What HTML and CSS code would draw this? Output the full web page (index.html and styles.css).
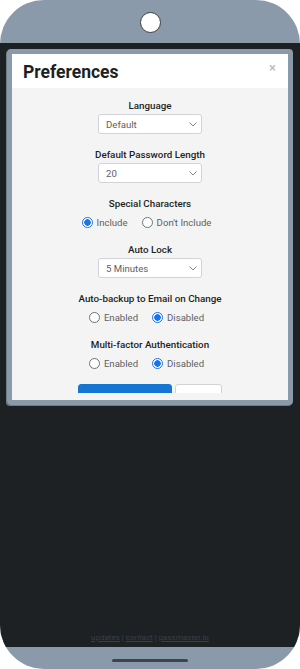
FILE: index.html
```html
<!DOCTYPE html>
<html>
<head>
<meta charset="utf-8">
<link rel="stylesheet" href="styles.css">
</head>
<body>
<div class="phone">
  <div class="top-bezel"><div class="camera"></div></div>
  <div class="screen">
    <div class="modal">
      <div class="modal-header">
        <h1 class="title">Preferences</h1>
        <span class="close">×</span>
      </div>
      <div class="modal-body">
        <div class="scroll">
          <div class="group">
            <div class="label">Language</div>
            <div class="select"><span>Default</span><svg class="chev" width="8" height="5" viewBox="0 0 8 5"><path d="M0.5 0.5 L4 4 L7.5 0.5" fill="none" stroke="#888" stroke-width="1"/></svg></div>
          </div>
          <div class="group">
            <div class="label">Default Password Length</div>
            <div class="select"><span>20</span><svg class="chev" width="8" height="5" viewBox="0 0 8 5"><path d="M0.5 0.5 L4 4 L7.5 0.5" fill="none" stroke="#888" stroke-width="1"/></svg></div>
          </div>
          <div class="group">
            <div class="label">Special Characters</div>
            <div class="radios">
              <label class="opt"><span class="radio checked"></span>Include</label>
              <label class="opt"><span class="radio"></span>Don't Include</label>
            </div>
          </div>
          <div class="group">
            <div class="label">Auto Lock</div>
            <div class="select"><span>5 Minutes</span><svg class="chev" width="8" height="5" viewBox="0 0 8 5"><path d="M0.5 0.5 L4 4 L7.5 0.5" fill="none" stroke="#888" stroke-width="1"/></svg></div>
          </div>
          <div class="group">
            <div class="label">Auto-backup to Email on Change</div>
            <div class="radios">
              <label class="opt"><span class="radio"></span>Enabled</label>
              <label class="opt"><span class="radio checked"></span>Disabled</label>
            </div>
          </div>
          <div class="group">
            <div class="label">Multi-factor Authentication</div>
            <div class="radios">
              <label class="opt"><span class="radio"></span>Enabled</label>
              <label class="opt"><span class="radio checked"></span>Disabled</label>
            </div>
          </div>
          <div class="buttons">
            <button class="btn primary">Save Preferences</button>
            <button class="btn secondary">Cancel</button>
          </div>
        </div>
      </div>
    </div>
    <div class="footer">
      <a href="#">updates</a> | <a href="#">contact</a> | <a href="#">passmaster.io</a>
    </div>
  </div>
  <div class="bottom-bezel"><div class="home-bar"></div></div>
</div>
</body>
</html>
```
FILE: styles.css
```css
html, body {
  margin: 0;
  padding: 0;
  background: #ffffff;
}
body {
  font-family: Roboto, "Liberation Sans", sans-serif;
}
.phone {
  width: 300px;
  height: 669px;
  border-radius: 44px;
  background: #8b9aab;
  overflow: hidden;
  display: flex;
  flex-direction: column;
}
.top-bezel {
  height: 43px;
  flex: none;
  display: flex;
  align-items: center;
  justify-content: center;
}
.camera {
  width: 21px;
  height: 21px;
  border-radius: 50%;
  background: #ffffff;
  border: 1px solid #3a3f45;
  box-sizing: border-box;
  margin-top: 1px;
}
.screen {
  flex: 1;
  background: #1e2124;
  display: flex;
  flex-direction: column;
  padding: 6px 7px 0 7px;
}
.modal {
  height: 356px;
  box-sizing: border-box;
  border: 5px solid #8b9aab;
  border-radius: 4px;
  display: flex;
  flex-direction: column;
  overflow: hidden;
  box-shadow: -1px 1px 0 #6f7c8a;
}
.modal-header {
  height: 34px;
  flex: none;
  background: #ffffff;
  display: flex;
  align-items: center;
  justify-content: space-between;
  padding: 0 12px 0 11px;
}
.title {
  margin: 0;
  font-size: 17.5px;
  font-weight: 700;
  color: #1d1f21;
  padding-top: 2px;
}
.close {
  color: #b5b5b5;
  font-size: 13px;
  margin-top: -7px;
}
.modal-body {
  flex: 1;
  min-height: 0;
  background: #f4f4f4;
  display: flex;
  flex-direction: column;
  padding-bottom: 7px;
}
.scroll {
  flex: 1;
  min-height: 0;
  overflow: hidden;
  display: flex;
  flex-direction: column;
  align-items: center;
  padding-top: 11px;
  gap: 14px;
}
.group {
  display: flex;
  flex-direction: column;
  align-items: center;
  flex: none;
}
.label {
  font-size: 9.8px;
  font-weight: 500;
  color: #1d1f21;
  line-height: 14px;
}
.select {
  position: relative;
  margin-top: 1px;
  width: 104px;
  height: 20px;
  box-sizing: border-box;
  border: 1px solid #d0d4d8;
  border-radius: 3px;
  background: #ffffff;
  display: flex;
  align-items: center;
  padding-left: 7px;
  font-size: 9.6px;
  color: #5c6166;
}
.chev {
  position: absolute;
  right: 4px;
  top: 7px;
}
.radios {
  display: flex;
  justify-content: center;
  gap: 14px;
  margin-top: 4px;
  padding-right: 7px;
  height: 14px;
}
.opt {
  display: flex;
  align-items: center;
  gap: 4px;
  font-size: 9.6px;
  color: #5c6166;
}
.radio {
  width: 11px;
  height: 11px;
  box-sizing: border-box;
  border-radius: 50%;
  border: 1px solid #6e7378;
  background: #ffffff;
  margin-top: 1px;
}
.radio.checked {
  border: 1px solid #1a73e8;
  background: radial-gradient(circle, #1a73e8 0 3px, #ffffff 3.5px);
}
.buttons {
  display: flex;
  gap: 3px;
  flex: none;
}
.btn {
  font-family: Roboto, "Liberation Sans", sans-serif;
  font-size: 9.6px;
  height: 26px;
  border-radius: 3px;
  padding: 0 8px;
  line-height: 14px;
}
.btn.primary {
  width: 94px;
  background: #1476d2;
  border: 1px solid #1476d2;
  color: #ffffff;
}
.btn.secondary {
  width: 47px;
  background: #ffffff;
  border: 1px solid #d0d4d8;
  color: #555a60;
}
.footer {
  margin-top: auto;
  margin-bottom: 5px;
  text-align: center;
  font-size: 8px;
  color: #3a3f45;
}
.footer a {
  color: #3a3f45;
}
.bottom-bezel {
  height: 22px;
  flex: none;
  display: flex;
  justify-content: center;
  padding-top: 12px;
  box-sizing: border-box;
}
.home-bar {
  width: 76px;
  height: 3px;
  border-radius: 2px;
  background: #3d444c;
}
```
